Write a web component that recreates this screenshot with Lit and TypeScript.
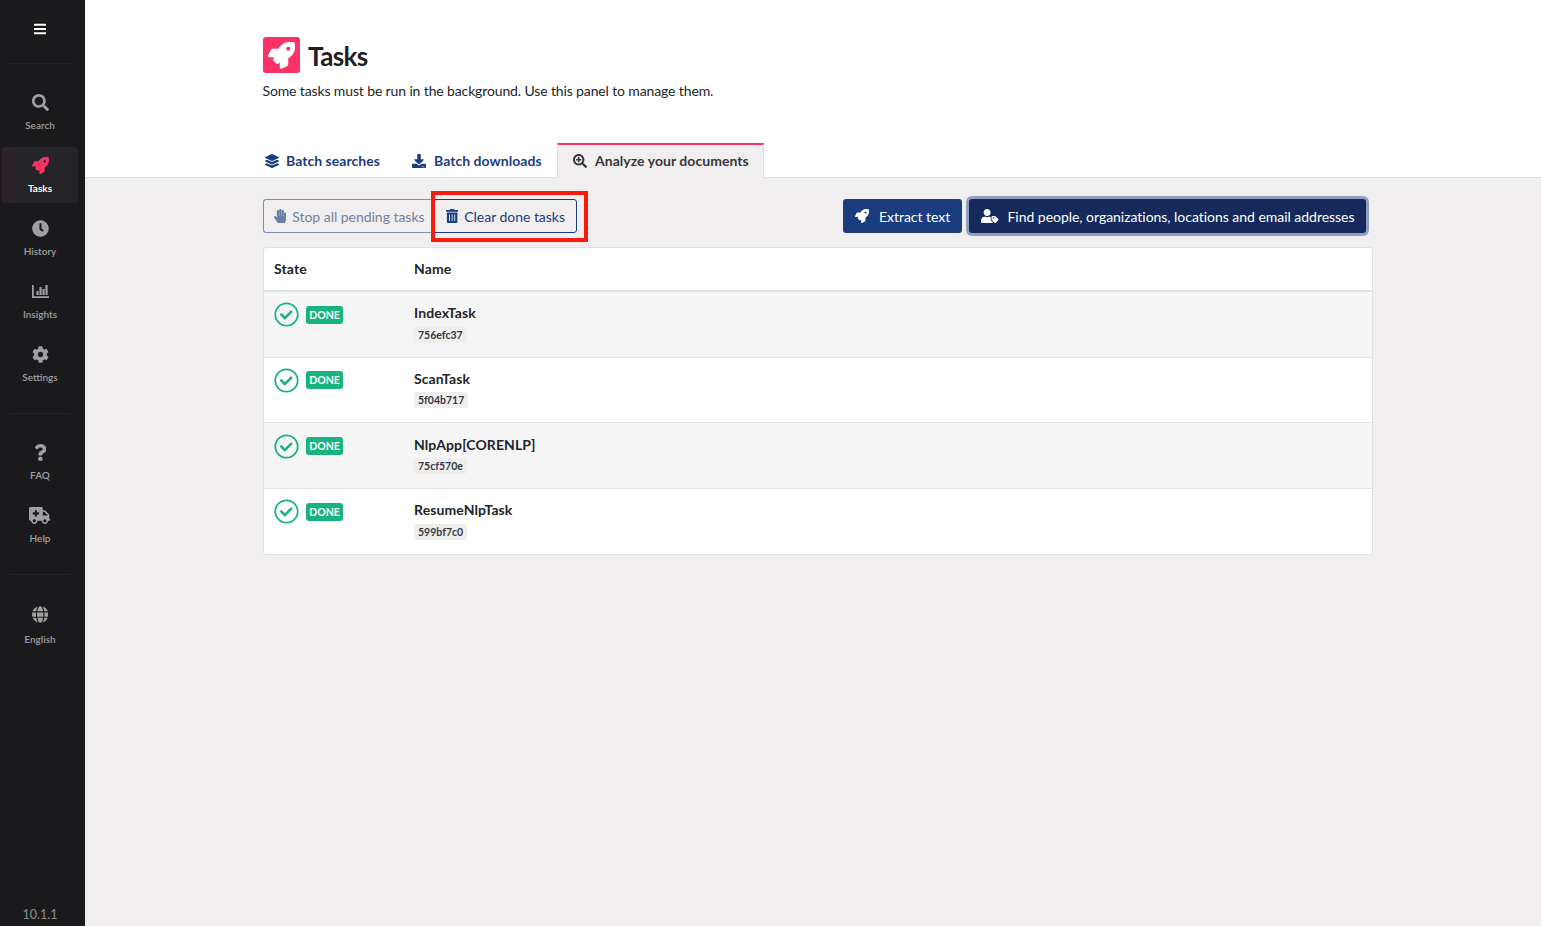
import { LitElement, html, css, svg } from "lit";
import { customElement } from "lit/decorators.js";

const P: Record<string, [number, string]> = {
  rocket: [512, "M505.12 19.09c-1.19-5.53-6.66-11-12.21-12.19C460.72 0 435.51 0 410.41 0 307.18 0 245.27 55.2 199.05 128H94.84c-16.35.02-35.56 11.88-42.89 26.48L2.52 253.3A28.4 28.4 0 0 0 0 264a24.01 24.01 0 0 0 24.01 24h103.81l-22.47 22.47c-11.37 11.36-13 32.26 0 45.25l50.9 50.9c11.16 11.19 32.16 13.16 45.28 0l22.47-22.47V488a24.01 24.01 0 0 0 24.01 24 28.56 28.56 0 0 0 10.71-2.52l98.73-49.39c14.63-7.3 26.51-26.5 26.51-42.86V312.8c72.6-46.31 128.03-108.41 128.03-211.09.01-25.2.01-50.4-6.95-82.62zM384.04 168A40 40 0 1 1 424.05 128a40.02 40.02 0 0 1-40.01 40z"],
  search: [512, "M505 442.7L405.3 343c-4.5-4.5-10.6-7-17-7H372c27.6-35.3 44-79.7 44-128C416 93.1 322.9 0 208 0S0 93.1 0 208s93.1 208 208 208c48.3 0 92.7-16.4 128-44v16.3c0 6.4 2.5 12.5 7 17l99.7 99.7c9.4 9.4 24.6 9.4 33.9 0l28.3-28.3c9.4-9.4 9.4-24.6.1-34zM208 336c-70.7 0-128-57.2-128-128 0-70.7 57.2-128 128-128 70.7 0 128 57.2 128 128 0 70.7-57.2 128-128 128z"],
  clock: [512, "M256 8C119 8 8 119 8 256s111 248 248 248 248-111 248-248S393 8 256 8zm92.49 313l-20 25a16 16 0 0 1-22.49 2.5l-67-49.72a40 40 0 0 1-15-31.23V112a16 16 0 0 1 16-16h32a16 16 0 0 1 16 16v144l58 42.5a16 16 0 0 1 2.49 22.5z"],
  chart: [512, "M0 60h54v336h458v54H0zM135 240h66v120h-66zM225 120h66v240h-66zM315 180h66v180h-66zM405 60h66v300h-66z"],
  cog: [512, "M487.4 315.7l-42.6-24.6c4.3-23.2 4.3-47 0-70.2l42.6-24.6c4.9-2.8 7.1-8.6 5.5-14-11.1-35.6-30-67.8-54.7-94.6-3.8-4.1-10-5.1-14.8-2.3L380.8 110c-17.9-15.4-38.5-27.3-60.8-35.1V25.8c0-5.6-3.9-10.5-9.4-11.7-36.7-8.2-74.3-7.8-109.2 0-5.5 1.2-9.4 6.1-9.4 11.7V75c-22.2 7.9-42.8 19.8-60.8 35.1L88.7 85.5c-4.9-2.8-11-1.9-14.8 2.3-24.7 26.7-43.6 58.9-54.7 94.6-1.7 5.4.6 11.2 5.5 14L67.3 221c-4.3 23.2-4.3 47 0 70.2l-42.6 24.6c-4.9 2.8-7.1 8.6-5.5 14 11.1 35.6 30 67.8 54.7 94.6 3.8 4.1 10 5.1 14.8 2.3l42.6-24.6c17.9 15.4 38.5 27.3 60.8 35.1v49.2c0 5.6 3.9 10.5 9.4 11.7 36.7 8.2 74.3 7.8 109.2 0 5.5-1.2 9.4-6.1 9.4-11.7v-49.2c22.2-7.9 42.8-19.8 60.8-35.1l42.6 24.6c4.9 2.8 11 1.9 14.8-2.3 24.7-26.7 43.6-58.9 54.7-94.6 1.5-5.5-.7-11.3-5.6-14.1zM256 336c-44.1 0-80-35.9-80-80s35.9-80 80-80 80 35.9 80 80-35.9 80-80 80z"],
  question: [384, "M202.021 0C122.202 0 70.503 32.703 29.914 91.026c-7.363 10.58-5.093 25.086 5.178 32.874l43.138 32.709c10.373 7.865 25.132 6.026 33.253-4.148 25.049-31.381 43.63-49.449 82.757-49.449 30.764 0 68.816 19.799 68.816 49.631 0 22.552-18.617 34.134-48.993 51.164-35.423 19.86-82.299 44.576-82.299 106.405V320c0 13.255 10.745 24 24 24h72.471c13.255 0 24-10.745 24-24v-5.773c0-42.86 125.268-44.645 125.268-160.627C377.504 66.256 286.902 0 202.021 0zM192 373.459c-38.196 0-69.271 31.075-69.271 69.271 0 38.195 31.075 69.27 69.271 69.27s69.271-31.075 69.271-69.271-31.075-69.27-69.271-69.27z"],
  ambulance: [640, "M624 352h-16V243.9c0-12.7-5.1-24.9-14.1-33.9L494 110.1c-9-9-21.2-14.1-33.9-14.1H416V48c0-26.5-21.5-48-48-48H48C21.5 0 0 21.5 0 48v320c0 26.5 21.5 48 48 48h16c0 53 43 96 96 96s96-43 96-96h128c0 53 43 96 96 96s96-43 96-96h48c8.8 0 16-7.2 16-16v-32c0-8.8-7.2-16-16-16zM160 464c-26.5 0-48-21.5-48-48s21.5-48 48-48 48 21.5 48 48-21.5 48-48 48zm144-248c0 4.4-3.6 8-8 8h-56v56c0 4.4-3.6 8-8 8h-48c-4.4 0-8-3.6-8-8v-56h-56c-4.4 0-8-3.6-8-8v-48c0-4.4 3.6-8 8-8h56v-56c0-4.4 3.6-8 8-8h48c4.4 0 8 3.6 8 8v56h56c4.4 0 8 3.6 8 8v48zm176 248c-26.5 0-48-21.5-48-48s21.5-48 48-48 48 21.5 48 48-21.5 48-48 48zm80-208H416V144h44.1l99.9 99.9V256z"],
  globe: [496, "M336.5 160C322 70.7 287.8 8 248 8s-74 62.7-88.5 152h177zM152 256c0 22.2 1.2 43.5 3.3 64h185.3c2.1-20.5 3.3-41.8 3.3-64s-1.2-43.5-3.3-64H155.3c-2.1 20.5-3.3 41.8-3.3 64zm324.7-96c-28.6-67.9-86.5-120.4-158-141.6 24.4 33.8 41.2 84.7 50 141.6h108zM177.2 18.4C105.8 39.6 47.8 92.1 19.3 160h108c8.7-56.9 25.5-107.8 49.9-141.6zM487.4 192H372.7c2.1 21 3.3 42.5 3.3 64s-1.2 43-3.3 64h114.6c5.5-20.5 8.6-41.8 8.6-64s-3.1-43.5-8.5-64zM120 256c0-21.5 1.2-43 3.3-64H8.6C3.2 212.5 0 233.8 0 256s3.2 43.5 8.6 64h114.6c-2-21-3.2-42.5-3.2-64zm39.5 96c14.5 89.3 48.7 152 88.5 152s74-62.7 88.5-152h-177zm159.3 141.6c71.4-21.2 129.4-73.7 158-141.6h-108c-8.8 56.9-25.6 107.8-50 141.6zM19.3 352c28.6 67.9 86.5 120.4 158 141.6-24.4-33.8-41.2-84.7-50-141.6h-108z"],
  layers: [512, "M12.41 148.02l232.94 105.67c6.8 3.09 14.49 3.09 21.29 0l232.94-105.67c16.55-7.51 16.55-32.52 0-40.03L266.65 2.31a25.607 25.607 0 0 0-21.29 0L12.41 107.98c-16.55 7.51-16.55 32.53 0 40.04zm487.18 88.28l-58.09-26.33-161.64 73.27c-7.56 3.43-15.59 5.17-23.86 5.17s-16.29-1.74-23.86-5.17L70.51 209.97l-58.1 26.33c-16.55 7.5-16.55 32.5 0 40l232.94 105.59c6.8 3.08 14.49 3.08 21.29 0L499.59 276.3c16.55-7.5 16.55-32.5 0-40zm0 127.8l-57.87-26.23-161.86 73.37c-7.56 3.43-15.59 5.17-23.86 5.17s-16.29-1.74-23.86-5.17L70.29 337.87 12.41 364.1c-16.55 7.5-16.55 32.5 0 40l232.94 105.59c6.8 3.08 14.49 3.08 21.29 0L499.59 404.1c16.55-7.5 16.55-32.5 0-40z"],
  download: [512, "M216 0h80c13.3 0 24 10.7 24 24v168h87.7c17.8 0 26.7 21.5 14.1 34.1L269.7 378.3c-7.5 7.5-19.8 7.5-27.3 0L90.1 226.1c-12.6-12.6-3.7-34.1 14.1-34.1H192V24c0-13.3 10.7-24 24-24zm296 376v112c0 13.3-10.7 24-24 24H24c-13.3 0-24-10.7-24-24V376c0-13.3 10.7-24 24-24h146.7l49 49c20.1 20.1 52.5 20.1 72.6 0l49-49H488c13.3 0 24 10.7 24 24zm-124 88c0-11-9-20-20-20s-20 9-20 20 9 20 20 20 20-9 20-20zm64 0c0-11-9-20-20-20s-20 9-20 20 9 20 20 20 20-9 20-20z"],
  searchPlus: [512, "M304 192v32c0 6.6-5.4 12-12 12h-56v56c0 6.6-5.4 12-12 12h-32c-6.6 0-12-5.4-12-12v-56h-56c-6.6 0-12-5.4-12-12v-32c0-6.6 5.4-12 12-12h56v-56c0-6.6 5.4-12 12-12h32c6.6 0 12 5.4 12 12v56h56c6.6 0 12 5.4 12 12zm201 284.7L476.7 505c-9.4 9.4-24.6 9.4-33.9 0L343 405.3c-4.5-4.5-7-10.6-7-17V372c-35.3 27.6-79.7 44-128 44C93.1 416 0 322.9 0 208S93.1 0 208 0s208 93.1 208 208c0 48.3-16.4 92.7-44 128h16.3c6.4 0 12.5 2.5 17 7l99.7 99.7c9.3 9.4 9.3 24.6 0 34zM344 208c0-75.2-60.8-136-136-136S72 132.8 72 208s60.8 136 136 136 136-60.8 136-136z"],
  hand: [448, "M408.781 128.007C386.356 127.578 368 146.36 368 168.79V256h-8V79.79c0-22.43-18.356-41.212-40.781-40.783C297.488 39.423 280 57.169 280 79v177h-8V40.79C272 18.36 253.644-.422 231.219.007 209.488.423 192 18.169 192 40v216h-8V80.79c0-22.43-18.356-41.212-40.781-40.783C121.488 40.423 104 58.169 104 80v235.992l-31.648-43.519c-12.993-17.866-38.009-21.817-55.877-8.823-17.865 12.994-21.815 38.01-8.822 55.877l125.601 172.705A48 48 0 0 0 172.073 512h197.59c22.274 0 41.622-15.324 46.724-37.006l26.508-112.66a192.011 192.011 0 0 0 5.104-43.975V168c.001-21.831-17.487-39.577-39.218-39.993z"],
  trash: [448, "M32 464a48 48 0 0 0 48 48h288a48 48 0 0 0 48-48V128H32zm272-256a16 16 0 0 1 32 0v224a16 16 0 0 1-32 0zm-96 0a16 16 0 0 1 32 0v224a16 16 0 0 1-32 0zm-96 0a16 16 0 0 1 32 0v224a16 16 0 0 1-32 0zM432 32H312l-9.4-18.7A24 24 0 0 0 281.1 0H166.8a23.72 23.72 0 0 0-21.4 13.3L136 32H16A16 16 0 0 0 0 48v32a16 16 0 0 0 16 16h416a16 16 0 0 0 16-16V48a16 16 0 0 0-16-16z"],
  userTag: [640, "M630.6 364.9l-90.3-90.2c-12-12-28.3-18.7-45.3-18.7h-79.3c-17.7 0-32 14.3-32 32v79.2c0 17 6.7 33.2 18.7 45.2l90.3 90.2c12.5 12.5 32.8 12.5 45.3 0l92.5-92.5c12.6-12.5 12.6-32.7.1-45.2zm-182.8-21c-13.3 0-24-10.7-24-24s10.7-24 24-24 24 10.7 24 24c0 13.2-10.7 24-24 24zm-223.8-88c70.7 0 128-57.3 128-128C352 57.3 294.7 0 224 0S96 57.3 96 128c0 70.6 57.3 128 128 128zm127.8 111.2V294c-12.2-3.6-24.9-6.2-38.2-6.2h-16.7c-22.2 10.2-46.9 16-72.9 16s-50.6-5.8-72.9-16h-16.7C60.2 288 0 348.2 0 422.4V464c0 26.5 21.5 48 48 48h352c15.5 0 29.1-7.5 37.9-18.9l-58-58c-18.1-18.1-28.1-42.2-28.1-67.9z"],
  bars: [448, "M16 132h416c8.837 0 16-7.163 16-16V76c0-8.837-7.163-16-16-16H16C7.163 60 0 67.163 0 76v40c0 8.837 7.163 16 16 16zm0 160h416c8.837 0 16-7.163 16-16v-40c0-8.837-7.163-16-16-16H16c-8.837 0-16 7.163-16 16v40c0 8.837 7.163 16 16 16zm0 160h416c8.837 0 16-7.163 16-16v-40c0-8.837-7.163-16-16-16H16c-8.837 0-16 7.163-16 16v40c0 8.837 7.163 16 16 16z"],
  check: [512, "M256 8C119.033 8 8 119.033 8 256s111.033 248 248 248 248-111.033 248-248S392.967 8 256 8zm0 36c117.2 0 212 94.8 212 212s-94.8 212-212 212S44 373.2 44 256 138.8 44 256 44zm122 150l-20-20c-4.7-4.7-12.3-4.7-17 0L222 292l-61-61c-4.7-4.7-12.3-4.7-17 0l-20 20c-4.7 4.7-4.7 12.3 0 17l89.5 89.5c4.7 4.7 12.3 4.7 17 0L378 211c4.7-4.7 4.7-12.3 0-17z"],
};

const icon = (name: string, cls = "") => {
  const [w, d] = P[name];
  return html`<svg class="ic ${cls}" viewBox="0 0 ${w} 512" aria-hidden="true">${svg`<path d=${d}></path>`}</svg>`;
};

const NAV_A = [
  ["search", "Search"],
  ["rocket", "Tasks"],
  ["clock", "History"],
  ["chart", "Insights"],
  ["cog", "Settings"],
];
const NAV_B = [
  ["question", "FAQ"],
  ["ambulance", "Help"],
];
const TASKS = [
  ["IndexTask", "756efc37"],
  ["ScanTask", "5f04b717"],
  ["NlpApp[CORENLP]", "75cf570e"],
  ["ResumeNlpTask", "599bf7c0"],
];

@customElement("app-root")
export class AppRoot extends LitElement {
  static styles = css`
    :host { display: block; font-family: Lato, "Liberation Sans", sans-serif; color: #212529; }
    * { box-sizing: border-box; }
    .ic { display: block; fill: currentColor; height: 16px; flex: none; }
    .page { display: flex; height: 926px; overflow: hidden; background: #f0eeef; }

    .side { width: 85px; flex: none; background: #1a1a1c; display: flex; flex-direction: column; align-items: center; color: #a09fa1; padding-right: 5px; }
    .burger { height: 64px; width: 62px; flex: none; border-bottom: 1px solid #252527; display: flex; justify-content: center; padding-top: 22px; color: #fff; }
    .burger .ic { height: 14px; width: 12px; }
    .group { display: flex; flex-direction: column; gap: 7px; width: 76px; }
    .g1 { padding-top: 20px; padding-bottom: 21px; }
    .g2 { padding-top: 20px; padding-bottom: 21px; }
    .rule { width: 62px; height: 1px; background: #252527; flex: none; }
    .item { height: 56px; display: flex; flex-direction: column; align-items: center; padding-top: 10px; border-radius: 4px; font-size: 10px; line-height: 13px; font-weight: 600; }
    .item .box { height: 17px; display: flex; align-items: center; justify-content: center; margin-bottom: 8px; }
    .item .ic { height: 17px; }
    .item.active { background: linear-gradient(90deg, #33212a 0, #252429 25%, #252429 100%); color: #fff; font-weight: 700; }
    .item.active .ic { color: #fa3265; }
    .item.lang .box { margin-top: 1px; margin-bottom: 10px; }
    .version { margin-top: auto; font-size: 12.5px; line-height: 16px; padding-bottom: 3px; color: #8d8c8e; }

    .main { flex: 1; min-width: 0; display: flex; flex-direction: column; }
    .head { background: #fff; height: 178px; flex: none; border-bottom: 1px solid #dfdfe0; padding: 37px 0 0 178px; }
    .title { display: flex; align-items: center; gap: 8px; height: 36px; }
    .logo { width: 37px; height: 36px; background: #fa3265; border-radius: 3px; color: #fff; display: flex; align-items: center; justify-content: center; }
    .logo .ic { height: 27px; }
    h1 { margin: 1px 0 0; font-size: 26px; line-height: 36px; font-weight: 700; color: #1f2022; letter-spacing: -0.6px; }
    .sub { margin: 9px 0 0 -0.5px; font-size: 14px; line-height: 18px; color: #212529; letter-spacing: -0.13px; }
    .tabs { display: flex; margin-top: 43px; height: 35px; }
    .tab { display: flex; align-items: center; gap: 7px; font-size: 14px; font-weight: 700; color: #193d7f; height: 35px; letter-spacing: 0.04px; }
    .tab .ic { height: 14px; }
    .t1 { width: 149px; padding-left: 2px; }
    .t2 { width: 145px; gap: 8px; }
    .t3 { width: 207px; padding: 0 0 2px 15px; gap: 8px; color: #37373b; background: #f0eeef; border: 1px solid #dfdfe0; border-top: 2px solid #fa3265; border-bottom: none; }

    .body { padding: 21px 168px 0 178px; }
    .bar { display: flex; justify-content: space-between; height: 34px; align-items: center; padding-right: 7px; }
    .btns { display: flex; align-items: center; }
    .btn { height: 34px; display: flex; align-items: center; font-size: 14px; border-radius: 3px; white-space: nowrap; letter-spacing: -0.03px; }
    .outline { border: 1px solid #193d7f; color: #193d7f; background: transparent; }
    .stop { width: 171px; padding-left: 10px; gap: 6px; border-color: #7a8db2; color: #72829f; border-radius: 3px 0 0 3px; border-right: none; }
    .stop .ic { height: 14px; color: #6c7ea3; }
    .clear { width: 143px; padding-left: 11px; gap: 6px; border-radius: 0 3px 3px 0; position: relative; }
    .clear .ic { height: 14px; }
    .mark { position: absolute; left: -4px; top: -9px; width: 157px; height: 51px; border: 4px solid #fa1a0e; pointer-events: none; }
    .fill { color: #fff; background: #193d7f; }
    .extract { width: 119px; padding-left: 12px; gap: 10px; margin-right: 7px; }
    .extract .ic { height: 14px; }
    .find { width: 397px; padding-left: 12px; gap: 9px; background: #152a5a; box-shadow: 0 0 0 3px #8da0c3; }
    .find .ic { height: 14px; }

    .table { margin-top: 14px; width: 1110px; background: #fff; border: 1px solid #dee2e6; border-radius: 3px; overflow: hidden; }
    .row { display: grid; grid-template-columns: 140px 1fr; padding-left: 10px; }
    .hd { height: 43px; padding-bottom: 1px; align-items: center; font-size: 14px; color: #212529; border-bottom: 1px solid #dee2e6; letter-spacing: 0.1px; }
    .hd span { font-weight: 700; }
    .tr { height: 65.67px; border-top: 1px solid #dee2e6; padding-top: 10.3px; align-items: start; }
    .odd { background: #f5f5f5; }
    .state { display: flex; align-items: flex-start; gap: 7px; }
    .state .ic { height: 25px; color: #18b37e; }
    .badge { margin-top: 3.5px; height: 18px; width: 37px; display: flex; align-items: center; justify-content: center; background: #18b37e; color: #fff; border-radius: 3px; font-size: 10.5px; font-weight: 700; }
    .name { font-size: 14px; line-height: 21.5px; font-weight: 700; color: #212529; letter-spacing: 0.1px; }
    .hash { display: flex; width: fit-content; margin-top: 2.9px; height: 16px; align-items: center; padding: 0 4px; background: #eeeeee; border-radius: 3px; font-size: 10.5px; font-weight: 700; color: #343a40; }
  `;

  private renderItem(name: string, label: string) {
    return html`<div class="item ${label === "Tasks" ? "active" : ""}"><div class="box">${icon(name)}</div><span>${label}</span></div>`;
  }

  render() {
    return html`
      <div class="page">
        <aside class="side">
          <div class="burger">${icon("bars")}</div>
          <div class="group g1">${NAV_A.map(([n, l]) => this.renderItem(n, l))}</div>
          <div class="rule"></div>
          <div class="group g2">${NAV_B.map(([n, l]) => this.renderItem(n, l))}</div>
          <div class="rule"></div>
          <div class="group g2"><div class="item lang"><div class="box">${icon("globe")}</div><span>English</span></div></div>
          <div class="version">10.1.1</div>
        </aside>
        <main class="main">
          <header class="head">
            <div class="title"><div class="logo">${icon("rocket")}</div><h1>Tasks</h1></div>
            <p class="sub">Some tasks must be run in the background. Use this panel to manage them.</p>
            <nav class="tabs">
              <div class="tab t1">${icon("layers")}<span>Batch searches</span></div>
              <div class="tab t2">${icon("download")}<span>Batch downloads</span></div>
              <div class="tab t3">${icon("searchPlus")}<span>Analyze your documents</span></div>
            </nav>
          </header>
          <section class="body">
            <div class="bar">
              <div class="btns">
                <div class="btn outline stop">${icon("hand")}<span>Stop all pending tasks</span></div>
                <div class="btn outline clear">${icon("trash")}<span>Clear done tasks</span><div class="mark"></div></div>
              </div>
              <div class="btns">
                <div class="btn fill extract">${icon("rocket")}<span>Extract text</span></div>
                <div class="btn fill find">${icon("userTag")}<span>Find people, organizations, locations and email addresses</span></div>
              </div>
            </div>
            <div class="table">
              <div class="row hd"><span>State</span><span>Name</span></div>
              ${TASKS.map(([n, h], i) => html`
                <div class="row tr ${i % 2 === 0 ? "odd" : ""}">
                  <div class="state">${icon("check")}<div class="badge">DONE</div></div>
                  <div><div class="name">${n}</div><div class="hash">${h}</div></div>
                </div>`)}
            </div>
          </section>
        </main>
      </div>
    `;
  }
}
